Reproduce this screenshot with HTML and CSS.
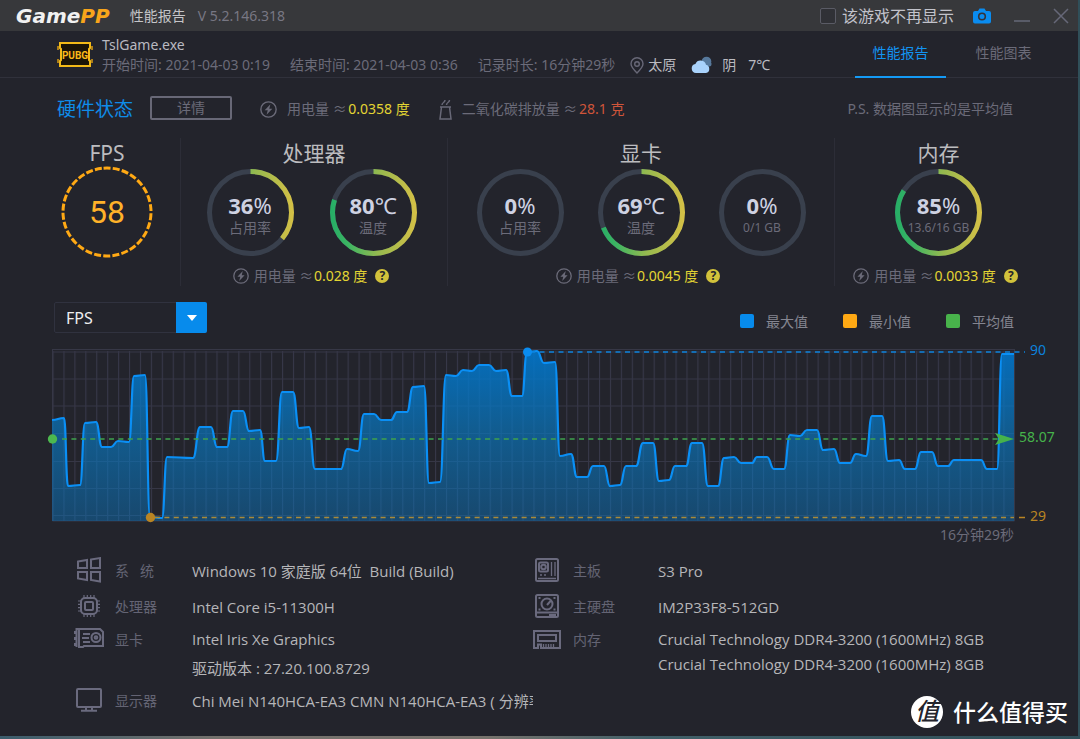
FILE: index.html
```html
<!DOCTYPE html>
<html lang="zh-CN">
<head>
<meta charset="utf-8">
<title>GamePP 性能报告</title>
<link rel="stylesheet" href="styles.css">
</head>
<body>
<svg class="defs" aria-hidden="true">
  <defs>
    <linearGradient id="arc" gradientUnits="userSpaceOnUse" x1="2" y1="0" x2="85" y2="0">
      <stop offset="0" stop-color="#27ae66"/><stop offset=".2" stop-color="#3db562"/><stop offset=".55" stop-color="#94b94f"/><stop offset="1" stop-color="#d3c046"/>
    </linearGradient>
    <symbol id="bolt" viewBox="0 0 16 16"><circle cx="8" cy="8" r="7.2" fill="none" stroke="currentColor" stroke-width="1.3"/><path d="M9.8 3 4.4 8.7h2.9L6.2 13l5.4-5.8H8.7z" fill="currentColor"/></symbol>
  </defs>
</svg>
<div class="window">
  <header class="titlebar">
    <span class="logo">Game<span class="logo-pp">PP</span></span>
    <span class="title">性能报告</span>
    <span class="version">V 5.2.146.318</span>
    <div class="window-tools">
      <label class="hide-game"><input type="checkbox"> 该游戏不再显示</label>
      <button class="tool camera" aria-label="截图"><svg width="18" height="16" viewBox="0 0 18 16"><path d="M2 3h3l1.500-2.400h5L13 3h3a2 2 0 0 1 2 2v8.500a2 2 0 0 1-2 2H2a2 2 0 0 1-2-2V5a2 2 0 0 1 2-2z" fill="#0a8cf0"/><circle cx="9" cy="8.500" r="3.300" fill="#0a8cf0" stroke="#33343c" stroke-width="1.600"/></svg></button>
      <button class="tool" aria-label="最小化"><svg width="16" height="16" viewBox="0 0 16 16"><path d="M0 13h16" stroke="#666878" stroke-width="1.500"/></svg></button>
      <button class="tool" aria-label="关闭"><svg width="16" height="16" viewBox="0 0 16 16"><path d="M1 1l14 14M15 1 1 15" stroke="#666878" stroke-width="1.500"/></svg></button>
    </div>
  </header>

  <div class="game">
    <svg class="game-icon" width="36" height="27" viewBox="0 0 36 27"><path d="M3 2h30v5l-1 1v11l1 1v5H3v-5l1-1V8L3 7z" fill="#1b1508" stroke="#f3ba18" stroke-width="2"/><path d="M1 5v4M1 18v4M35 5v4M35 18v4" stroke="#d89b15" stroke-width="1.500"/><text x="18" y="18" text-anchor="middle" class="game-icon-text">PUBG</text></svg>
    <div class="game-info">
      <div class="game-name">TslGame.exe</div>
      <div class="game-meta">
        <span>开始时间: 2021-04-03 0:19</span>
        <span>结束时间: 2021-04-03 0:36</span>
        <span>记录时长: 16分钟29秒</span>
        <span class="place"><svg width="14" height="17" viewBox="0 0 14 17"><path d="M7 16C3 12 1 9.500 1 6.800a6 6 0 0 1 12 0C13 9.500 11 12 7 16z" fill="none" stroke="#686877" stroke-width="1.400"/><circle cx="7" cy="7" r="2.300" fill="none" stroke="#686877" stroke-width="1.400"/></svg>太原</span>
        <span class="weather"><svg width="21" height="18" viewBox="0 0 21 18"><circle cx="15.500" cy="5.500" r="4.800" fill="#57799c"/><circle cx="18" cy="8" r="2.500" fill="#57799c"/><path d="M5 17a4.600 4.600 0 0 1-.6-9.100A5.600 5.600 0 0 1 15 8.800 4.200 4.200 0 0 1 15 17z" fill="#a9d2fb"/></svg>阴</span>
        <span class="temp">7℃</span>
      </div>
    </div>
    <nav class="tabs">
      <a class="tab active" href="#report">性能报告</a>
      <a class="tab" href="#charts">性能图表</a>
    </nav>
  </div>

  <main class="content">
    <div class="hardware-head">
      <h1>硬件状态</h1>
      <button class="detail">详情</button>
      <span class="usage power"><svg width="17" height="17"><use href="#bolt"/></svg>用电量 ≈ <b class="yellow">0.0358 度</b></span>
      <span class="usage"><svg width="13" height="21" viewBox="0 0 13 21"><path d="M2.500 8h8l1.500 12H1zM1 8h11M3 6c0-3 3-2 3-5M7.500 6c0-3 3-2 3-5" fill="none" stroke="#686877" stroke-width="1.500"/></svg>二氧化碳排放量 ≈ <b class="red">28.1 克</b></span>
      <span class="note">P.S. 数据图显示的是平均值</span>
    </div>

    <div class="panels">
      <section class="panel">
        <h2>FPS</h2>
        <div class="gauge fps"><svg viewBox="0 0 92 92"><circle cx="46" cy="46" r="44" fill="none" stroke="#ffa914" stroke-width="3" stroke-dasharray="7 2.215" transform="rotate(-94.500 46 46)"/></svg><strong>58</strong></div>
      </section>
      <section class="panel">
        <h2>处理器</h2>
        <div class="gauges pair">
          <div class="gauge"><svg viewBox="0 0 87 87"><circle class="track" cx="43.500" cy="43.500" r="41"/><path class="value" pathLength="100" stroke-dasharray="36 100" d="M43.500 2.500a41 41 0 0 1 0 82a41 41 0 0 1 0-82"/></svg><strong>36<span>%</span></strong><small>占用率</small></div>
          <div class="gauge"><svg viewBox="0 0 87 87"><circle class="track" cx="43.500" cy="43.500" r="41"/><path class="value" pathLength="100" stroke-dasharray="80 100" d="M43.500 2.500a41 41 0 0 1 0 82a41 41 0 0 1 0-82"/></svg><strong>80<span>℃</span></strong><small>温度</small></div>
        </div>
        <div class="energy"><svg width="16" height="16"><use href="#bolt"/></svg>用电量 ≈ <b class="yellow">0.028 度</b><button class="help" aria-label="说明">?</button></div>
      </section>
      <section class="panel">
        <h2>显卡</h2>
        <div class="gauges">
          <div class="gauge"><svg viewBox="0 0 87 87"><circle class="track" cx="43.500" cy="43.500" r="41"/></svg><strong>0<span>%</span></strong><small>占用率</small></div>
          <div class="gauge"><svg viewBox="0 0 87 87"><circle class="track" cx="43.500" cy="43.500" r="41"/><path class="value" pathLength="100" stroke-dasharray="69 100" d="M43.500 2.500a41 41 0 0 1 0 82a41 41 0 0 1 0-82"/></svg><strong>69<span>℃</span></strong><small>温度</small></div>
          <div class="gauge"><svg viewBox="0 0 87 87"><circle class="track" cx="43.500" cy="43.500" r="41"/></svg><strong>0<span>%</span></strong><small class="size">0/1 GB</small></div>
        </div>
        <div class="energy"><svg width="16" height="16"><use href="#bolt"/></svg>用电量 ≈ <b class="yellow">0.0045 度</b><button class="help" aria-label="说明">?</button></div>
      </section>
      <section class="panel">
        <h2>内存</h2>
        <div class="gauges">
          <div class="gauge"><svg viewBox="0 0 87 87"><circle class="track" cx="43.500" cy="43.500" r="41"/><path class="value" pathLength="100" stroke-dasharray="84 100" d="M43.500 2.500a41 41 0 0 1 0 82a41 41 0 0 1 0-82"/></svg><strong>85<span>%</span></strong><small class="size">13.6/16 GB</small></div>
        </div>
        <div class="energy"><svg width="16" height="16"><use href="#bolt"/></svg>用电量 ≈ <b class="yellow">0.0033 度</b><button class="help" aria-label="说明">?</button></div>
      </section>
    </div>

    <div class="chart-bar">
      <div class="metric">
        <select aria-label="指标"><option>FPS</option></select>
        <span class="metric-arrow"><svg width="10" height="6" viewBox="0 0 10 6"><path d="M0 0h10L5 6z" fill="#fff"/></svg></span>
      </div>
      <ul class="legend">
        <li><i class="swatch max"></i>最大值</li>
        <li><i class="swatch min"></i>最小值</li>
        <li><i class="swatch avg"></i>平均值</li>
      </ul>
    </div>

    <svg class="chart" viewBox="34 340 1026 206" role="img" aria-label="FPS">
      <defs>
        <linearGradient id="area" gradientUnits="userSpaceOnUse" x1="0" y1="350" x2="0" y2="521"><stop offset="0" stop-color="#0078d0" stop-opacity=".88"/><stop offset=".5" stop-color="#087ac4" stop-opacity=".64"/><stop offset="1" stop-color="#087ac8" stop-opacity=".42"/></linearGradient>
        <pattern id="cols" patternUnits="userSpaceOnUse" x="52.500" y="349" width="10.930" height="172"><path d="M.5 0v172" stroke="#373849" stroke-width="1.200"/></pattern>
      </defs>
      <rect x="52.500" y="351" width="962" height="170" fill="url(#cols)"/>
      <path d="M52.500 349.500h962M52.500 352h962M52.500 379h962M52.500 406h962M52.500 433.500h962M52.500 461.500h962M52.500 488.500h962M52.500 515.500h962M52.500 521h962M52.500 349v172M1014.500 349v172" fill="none" stroke="#363746"/>
      <path id="fill" fill="url(#area)"/>
      <path id="line" fill="none" stroke="#0a8ff5" stroke-width="2.200" stroke-linejoin="round"/>
      <path d="M530 352h495" stroke="#0c82dc" stroke-width="1.500" stroke-dasharray="5 4.500"/>
      <path d="M62 439h938" stroke="#3fa34d" stroke-width="1.500" stroke-dasharray="5 4.400"/>
      <path d="M155 517.500h859" stroke="#a98a3a" stroke-width="1.500" stroke-dasharray="5 4.400"/>
      <path d="M1019 517.500h6" stroke="#b98423" stroke-width="1.500"/>
      <circle cx="527.500" cy="352" r="4.500" fill="#0a8cf0"/>
      <circle cx="52.500" cy="439" r="4.700" fill="#4cb84f"/>
      <circle cx="150.500" cy="517.500" r="4.700" fill="#b98423"/>
      <path d="M995 433l19 6-19 6 4-6z" fill="#46b34b"/>
      <text class="mark mark-max" x="1030" y="355">90</text>
      <text class="mark mark-avg" x="1019" y="442">58.07</text>
      <text class="mark mark-min" x="1030" y="521">29</text>
      <text class="mark mark-time" x="1014" y="540">16分钟29秒</text>
    </svg>

    <div class="specs">
      <dl class="spec-list">
        <div class="spec">
          <dt><span class="spec-icon"><svg width="26" height="26" viewBox="0 0 26 26"><path d="M2 4.500l9-1.500V11H2zM15 2.600l9-1.500V11h-9zM2 15h9v8l-9-1.500zM15 15h9v9.500l-9-1.500z"/></svg></span>系&nbsp;&nbsp;&nbsp;统</dt>
          <dd>Windows 10 家庭版 64位 &nbsp;Build (Build)</dd>
        </div>
        <div class="spec">
          <dt><span class="spec-icon"><svg width="22" height="22" viewBox="0 0 22 22"><rect x="3" y="3" width="16" height="16" rx="4"/><rect x="7" y="7" width="8" height="8" rx="1"/><path d="M6 0v3M9.300 0v3M12.700 0v3M16 0v3M6 19v3M9.300 19v3M12.700 19v3M16 19v3M0 6h3M0 9.300h3M0 12.700h3M0 16h3M19 6h3M19 9.300h3M19 12.700h3M19 16h3" stroke-width="1.200"/></svg></span>处理器</dt>
          <dd>Intel Core i5-11300H</dd>
        </div>
        <div class="spec gpu">
          <dt><span class="spec-icon"><svg width="30" height="20" viewBox="0 0 30 20"><path d="M5 1h21l3 3v14H10l-1 1H5zM5 1H2.500v18M1 3v3M1 9v3M1 15v3M9 6h7M8 10h7M9 14h7"/><circle cx="22" cy="9.500" r="4.500"/><circle cx="22" cy="9.500" r="1.300"/></svg></span>显卡</dt>
          <dd>Intel Iris Xe Graphics<br>驱动版本 : 27.20.100.8729</dd>
        </div>
        <div class="spec">
          <dt><span class="spec-icon"><svg width="26" height="24" viewBox="0 0 26 24"><rect x="1" y="1" width="24" height="18" rx="1"/><path d="M10 19v3M16 19v3M5 22.800h16"/></svg></span>显示器</dt>
          <dd class="cut">Chi Mei N140HCA-EA3 CMN N140HCA-EA3 ( 分辨率</dd>
        </div>
      </dl>
      <dl class="spec-list right">
        <div class="spec">
          <dt><span class="spec-icon"><svg width="24" height="24" viewBox="0 0 24 24"><rect x="1" y="1" width="22" height="22" rx="1.500"/><rect x="4" y="4.500" width="9" height="9" rx="1.500"/><circle cx="8.500" cy="9" r="2.300"/><path d="M16.500 4v14M20 4v14M5 17h2M9 17h2M3 20.500h18" stroke-width="1.300"/></svg></span>主板</dt>
          <dd>S3 Pro</dd>
        </div>
        <div class="spec">
          <dt><span class="spec-icon"><svg width="24" height="24" viewBox="0 0 24 24"><rect x="1" y="1" width="22" height="22" rx="1.500"/><circle cx="12" cy="10" r="5.500"/><path d="M12 11l4-4.500M2 18.500h20M14 21h7M3.500 4h2M18.500 4h2M3.500 15.500h2M18.500 15.500h2"/></svg></span>主硬盘</dt>
          <dd>IM2P33F8-512GD</dd>
        </div>
        <div class="spec ram">
          <dt><span class="spec-icon"><svg width="28" height="19" viewBox="0 0 28 19"><path d="M1 1h26v17H8v-3.500H5V18H1z"/><rect x="5" y="5" width="18" height="6"/><path d="M10.500 14v4M13 14v4M15.500 14v4M18 14v4M20.500 14v4" stroke-width="1.300"/></svg></span>内存</dt>
          <dd>Crucial Technology DDR4-3200 (1600MHz) 8GB<br>Crucial Technology DDR4-3200 (1600MHz) 8GB</dd>
        </div>
      </dl>
    </div>
  </main>
  <div class="watermark"><span class="watermark-badge">值</span>什么值得买</div>
</div>
<script src="chart.js"></script>
</body>
</html>
```
FILE: styles.css
```css
* { box-sizing: border-box; }
body {
  margin: 0;
  min-height: 100vh;
  display: flex;
  padding: 0 2px 3px 0;
  background: linear-gradient(90deg, #3c5d6d, #74716d 20%, #77736d 45%, #426069 60%, #304f59);
  font: 14px/20px "Noto Sans", "Noto Sans CJK SC", sans-serif;
  color: #6b6b79;
}
h1, h2, ul, dl, dd { margin: 0; padding: 0; font-weight: 400; }
b { font-weight: 400; }
button { font: inherit; color: inherit; background: none; border: 0; padding: 0; }
a { color: inherit; text-decoration: none; }
svg { flex: none; }
.defs { position: absolute; width: 0; height: 0; }
.window { position: relative; flex: 1; min-width: 0; background: #23242c; }

.titlebar { display: flex; align-items: center; height: 31px; padding: 0 9px 0 16px; background: #37383b; }
.logo { font: italic bold 20px/30px "DejaVu Sans", sans-serif; color: #f1f1f1; }
.logo-pp { color: #f8a51b; }
.title { margin-left: 20px; color: #c5c5c8; }
.version { margin-left: 12px; color: #777783; }
.window-tools { display: flex; align-items: center; gap: 23px; margin-left: auto; }
.hide-game { display: flex; align-items: center; gap: 6px; font-size: 16px; color: #c2c3cb; margin-right: -4px; }
.hide-game input { appearance: none; width: 16px; height: 16px; margin: 0; border: 1px solid #5a5b65; border-radius: 2px; background: #303136; }
.tool { display: flex; }

.game { display: flex; height: 47px; padding-left: 57px; border-bottom: 1px solid #30313b; }
.game-icon { margin-top: 10px; }
.game-icon-text { font: bold 10px Roboto, sans-serif; fill: #f9ba19; }
.game-info { padding: 4px 0 0 9px; white-space: nowrap; }
.game-name { color: #b9b9c0; }
.game-meta { display: flex; gap: 20px; }
.place, .weather { display: flex; align-items: center; gap: 4px; margin-left: -5px; color: #bbbbc1; }
.weather { gap: 10px; }
.temp { color: #bbbbc1; margin-left: -8px; }
.tabs { display: flex; gap: 12px; margin-left: auto; padding-right: 29px; }
.tab { width: 91px; height: 47px; padding-top: 12px; text-align: center; }
.tab.active { color: #1294f3; border-bottom: 2px solid #149af5; }

.content { padding: 18px 36px 16px 34px; }
.hardware-head { display: flex; align-items: center; height: 26px; padding: 0 29px 0 23px; }
.hardware-head h1 { font-size: 19px; line-height: 24px; color: #0f8ce8; }
.detail { width: 82px; height: 24px; margin: 0 28px 0 17px; align-self: flex-start; border: 2px solid #686877; border-radius: 2px; line-height: 20px; }
.usage { display: flex; align-items: center; gap: 10px; margin-right: 29px; white-space: pre; }
.usage b { margin-left: -12px; }
.yellow { color: #e3d533; }
.red { color: #d0553a; }
.note { margin-left: auto; }

.panels { display: grid; grid-template-columns: 146fr 267fr 387fr 208fr; margin-top: 16px; }
.panel { display: flex; flex-direction: column; align-items: center; min-height: 148px; }
.panel + .panel { border-left: 1px solid #2c2d37; }
.panel h2 { font-size: 21px; line-height: 31px; color: #bcbcbf; }
.gauges { display: flex; gap: 34px; }
.pair { gap: 36px; padding-right: 5px; }
.gauge { position: relative; width: 87px; height: 87px; display: flex; flex-direction: column; align-items: center; padding-top: 23px; }
.gauge svg { position: absolute; inset: 0; }
.track { fill: none; stroke: #39404d; stroke-width: 5; }
.value { fill: none; stroke: url(#arc); stroke-width: 5; }
.gauge strong { font-size: 22px; line-height: 26px; color: #ced2e2; font-weight: 700; }
.gauge strong span { font-weight: 400; }
.gauge small { font-size: 14px; line-height: 20px; }
.gauge .size { font-size: 12px; }
.fps { width: 92px; height: 92px; justify-content: center; padding: 0; margin-top: -3px; }
.fps strong { font: 400 32px/32px Roboto, sans-serif; color: #ffb229; }
.energy { display: flex; align-items: center; gap: 5px; margin-top: 10px; padding-right: 6px; white-space: pre; }
.energy b { margin-left: -8px; }
.help { width: 14px; height: 14px; margin-left: 3px; border-radius: 50%; background: #d2c23b; color: #26262b; font-weight: 700; font-size: 12px; line-height: 14px; }

.chart-bar { display: flex; justify-content: space-between; margin: 16px 28px 7px 20px; }
.metric { position: relative; width: 153px; height: 31px; }
.metric select { appearance: none; width: 100%; height: 100%; padding: 0 11px; border: 1px solid #30323f; border-radius: 2px; background: #23242c; color: #eeeef0; font: inherit; font-size: 16px; }
.metric-arrow { position: absolute; right: 0; top: 0; width: 31px; height: 31px; display: flex; align-items: center; justify-content: center; background: #078bec; border-radius: 0 2px 2px 0; pointer-events: none; }
.legend { display: flex; gap: 35px; list-style: none; padding-top: 10px; color: #858691; }
.legend li { display: flex; gap: 12px; }
.swatch { width: 14px; height: 14px; margin-top: 2px; border-radius: 2px; }
.max { background: #078bec; }
.min { background: #ffa914; }
.avg { background: #48b34b; }

.chart { display: block; width: calc(100% + 18px); height: auto; }
.mark { font-size: 14px; }
.mark-max { fill: #0c82dc; }
.mark-avg { fill: #46b34b; }
.mark-min { fill: #b98423; }
.mark-time { fill: #6b6b79; text-anchor: end; }

.specs { display: grid; grid-template-columns: minmax(0, 499fr) minmax(0, 509fr); padding-top: 7px; }
.spec { display: flex; line-height: 36px; white-space: nowrap; }
.spec dt { display: flex; width: 158px; flex: none; color: #646474; }
.right dt { width: 125px; }
.spec dd { font-family: "Open Sans", "Noto Sans CJK SC", sans-serif; font-size: 15px; color: #b6b6b9; min-width: 0; }
.spec-icon { display: flex; align-items: center; justify-content: center; width: 30px; height: 34px; margin: 0 11px 0 40px; }
.right .spec-icon { width: 28px; margin: 0 12px 0 0; }
.spec-icon svg { fill: none; stroke: #6a6a7e; stroke-width: 2; }
.gpu { line-height: 29px; }
.ram { line-height: 25px; padding-top: 2px; }
.gpu .spec-icon, .ram .spec-icon { height: 25px; }
.cut { overflow: hidden; }
.watermark { position: absolute; right: 10px; bottom: 7px; display: flex; align-items: center; gap: 10px; font-size: 23px; line-height: 34px; font-weight: 500; color: #fff; }
.watermark-badge { width: 32px; height: 32px; border-radius: 50%; background: #fff; color: #24242c; font-size: 24px; line-height: 30px; font-style: italic; text-align: center; }
```
FILE: chart.js
```js
// Sampled curve: x, y pairs joined by horizontal-tangent curves.
const points = [
  52,420, 64,418, 68,486, 80,485, 85,423, 96,422, 102,447, 111,447, 118,441, 129,442,
  134,376, 145,375, 150,517, 162,518, 167,457, 193,458, 200,427, 211,427, 217,447, 227,447,
  233,411, 243,411, 249,431, 260,430, 265,461, 276,461, 282,392, 293,392, 299,428, 309,427,
  315,469, 341,469, 347,449, 358,451, 364,414, 374,414, 381,420, 391,420, 397,412, 407,412,
  413,387, 424,386, 429,483, 440,482, 446,375, 456,376, 463,370, 472,371, 479,365, 489,365,
  496,371, 506,370, 512,396, 522,396, 527,352, 537,351, 544,363, 555,362, 560,456, 571,454,
  577,477, 587,477, 593,466, 604,466, 610,486, 620,485, 626,466, 636,466, 643,443, 653,443,
  659,481, 669,480, 675,466, 686,466, 692,443, 702,443, 708,486, 718,486, 724,458, 734,457,
  741,463, 752,463, 757,457, 767,457, 774,469, 784,469, 790,435, 800,436, 807,430, 817,430,
  823,450, 834,449, 840,463, 850,463, 856,454, 866,456, 872,416, 882,416, 888,461, 899,460,
  905,469, 915,469, 921,452, 932,452, 938,466, 948,466, 954,460, 981,460, 987,469, 997,469,
  1002,354, 1014,354
];

let d = `M${points[0]} ${points[1]}`;
for (let i = 2; i < points.length; i += 2) {
  const mid = (points[i - 2] + points[i]) / 2;
  d += `C${mid} ${points[i - 1]} ${mid} ${points[i + 1]} ${points[i]} ${points[i + 1]}`;
}
document.getElementById("line").setAttribute("d", d);
document.getElementById("fill").setAttribute("d", d + "V521H52Z");
```
